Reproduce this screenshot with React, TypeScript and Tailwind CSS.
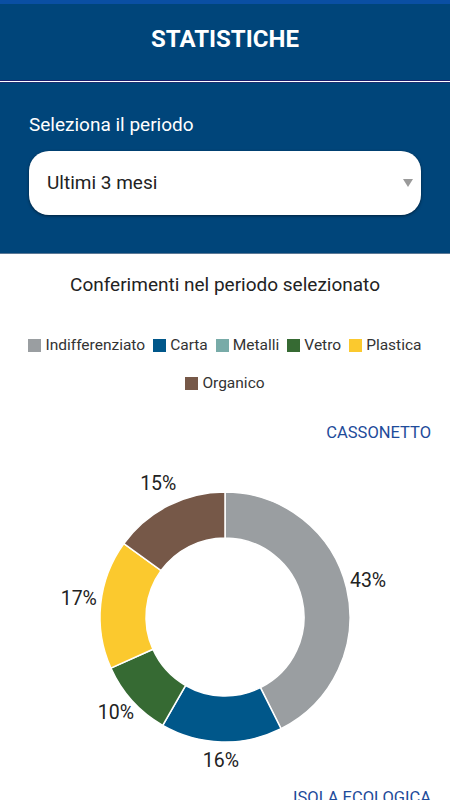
import React from "react";

const slices = [
  { label: "Indifferenziato", color: "#9a9ea1", value: 42.6, text: "43%" },
  { label: "Carta", color: "#00578a", value: 15.7, text: "16%" },
  { label: "Metalli", color: "#78aba8", value: 0, text: "" },
  { label: "Vetro", color: "#366a33", value: 10, text: "10%" },
  { label: "Plastica", color: "#fbc92e", value: 16.7, text: "17%" },
  { label: "Organico", color: "#765848", value: 15, text: "15%" },
];

const CX = 225;
const CY = 618;
const R = 125;
const RI = 79;

const pt = (r: number, frac: number) => {
  const a = frac * 2 * Math.PI;
  return [CX + r * Math.sin(a), CY - r * Math.cos(a)];
};

const Donut = () => {
  let acc = 0;
  const total = slices.reduce((s, x) => s + x.value, 0);
  return (
    <svg width="450" height="310" viewBox="0 465 450 310" className="block">
      {slices
        .filter((s) => s.value > 0)
        .map((s) => {
          const a0 = acc / total;
          acc += s.value;
          const a1 = acc / total;
          const large = a1 - a0 > 0.5 ? 1 : 0;
          const [x0, y0] = pt(R, a0);
          const [x1, y1] = pt(R, a1);
          const [x2, y2] = pt(RI, a1);
          const [x3, y3] = pt(RI, a0);
          const d = `M${x0} ${y0} A${R} ${R} 0 ${large} 1 ${x1} ${y1} L${x2} ${y2} A${RI} ${RI} 0 ${large} 0 ${x3} ${y3} Z`;
          const [lx, ly] = pt(147, (a0 + a1) / 2);
          return (
            <g key={s.label}>
              <path d={d} fill={s.color} stroke="#ffffff" strokeWidth="1.5" />
              <text
                x={lx}
                y={ly - 3}
                textAnchor="middle"
                dominantBaseline="central"
                fontSize="19.5"
                fill="#222"
                fontFamily="Roboto, sans-serif"
              >
                {s.text}
              </text>
            </g>
          );
        })}
    </svg>
  );
};

export default function App() {
  return (
    <div className="w-[450px] h-[800px] overflow-hidden bg-white font-['Roboto',sans-serif]">
      {/* status strip + header */}
      <div className="h-[4px] bg-[#0a4fa3]" />
      <div className="h-[76px] bg-[#00457a] flex items-center justify-center pb-[6px]">
        <h1 className="text-white font-bold text-[24px]">STATISTICHE</h1>
      </div>
      <div className="h-px bg-[#1c1f6e]" />
      <div className="h-px bg-white" />
      <div className="h-px bg-[#1c2f70]" />

      {/* period selector */}
      <div className="bg-[#00457a] h-[171px] px-[29px] pt-[30px] border-b border-[#5b7895]">
        <p className="text-white text-[19px] leading-[24px]">Seleziona il periodo</p>
        <div className="mt-[14px] h-[64px] rounded-[20px] bg-white shadow-[0_1px_3px_rgba(0,0,0,0.5)] flex items-center justify-between pl-[18px] pr-[8px]">
          <span className="text-[19px] text-[#222]">Ultimi 3 mesi</span>
          <span className="w-0 h-0 border-l-[5px] border-r-[5px] border-t-[8px] border-l-transparent border-r-transparent border-t-[#9a9a9a]" />
        </div>
      </div>

      {/* chart section */}
      <p className="mt-[18px] text-center text-[19px] leading-[26px] text-[#222]">Conferimenti nel periodo selezionato</p>

      <div className="mt-[36px] flex flex-wrap justify-center gap-x-[8px] gap-y-[16px] px-[20px] text-[15.5px] text-[#333] leading-[22px]">
        {slices.map((s) => (
          <div key={s.label} className="flex items-center gap-[4px]">
            <span className="w-[13px] h-[13px] inline-block" style={{ backgroundColor: s.color }} />
            <span>{s.label}</span>
          </div>
        ))}
      </div>

      <div className="mt-[28px] pr-[19px] text-right text-[16.5px] leading-[22px] text-[#1e4b9a]">CASSONETTO</div>

      <div className="mt-[20px]">
        <Donut />
      </div>

      <div className="mt-[13px] pr-[19px] text-right text-[16.5px] leading-[22px] text-[#1e4b9a]">ISOLA ECOLOGICA</div>
    </div>
  );
}
